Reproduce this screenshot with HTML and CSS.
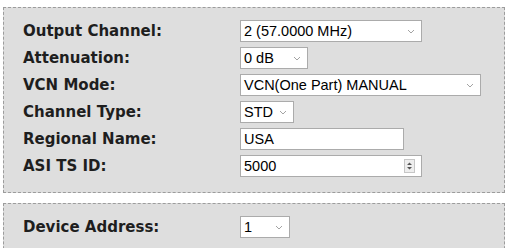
FILE: index.html
```html
<!DOCTYPE html>
<html lang="en">
<head>
<meta charset="UTF-8">
<meta name="viewport" content="width=device-width, initial-scale=1.0">
<title>Channel Settings</title>
<link rel="stylesheet" href="styles.css">
</head>
<body>

<div class="panel">
    <div class="row">
        <span class="label">Output Channel:</span>
        <div class="field select w-182">
            <span>2 (57.0000 MHz)</span>
            <svg class="chevron" width="8" height="5" viewBox="0 0 8 5"><path d="M1 1l3 3 3-3" /></svg>
        </div>
    </div>
    <div class="row">
        <span class="label">Attenuation:</span>
        <div class="field select w-68">
            <span>0 dB</span>
            <svg class="chevron" width="8" height="5" viewBox="0 0 8 5"><path d="M1 1l3 3 3-3" /></svg>
        </div>
    </div>
    <div class="row">
        <span class="label">VCN Mode:</span>
        <div class="field select w-241">
            <span>VCN(One Part) MANUAL</span>
            <svg class="chevron" width="8" height="5" viewBox="0 0 8 5"><path d="M1 1l3 3 3-3" /></svg>
        </div>
    </div>
    <div class="row">
        <span class="label">Channel Type:</span>
        <div class="field select w-54">
            <span>STD</span>
            <svg class="chevron" width="8" height="5" viewBox="0 0 8 5"><path d="M1 1l3 3 3-3" /></svg>
        </div>
    </div>
    <div class="row">
        <span class="label">Regional Name:</span>
        <div class="field w-164">
            <span>USA</span>
        </div>
    </div>
    <div class="row">
        <span class="label">ASI TS ID:</span>
        <div class="field number w-182">
            <span>5000</span>
            <svg class="spinner" width="11" height="14" viewBox="0 0 11 14">
                <rect x="0.5" y="0.5" width="10" height="13" />
                <path d="M3 6h5L5.5 3.5z M3 8h5l-2.5 2.5z" />
            </svg>
        </div>
    </div>
</div>

<div class="panel panel-device">
    <div class="row">
        <span class="label">Device Address:</span>
        <div class="field select w-50">
            <span>1</span>
            <svg class="chevron" width="8" height="5" viewBox="0 0 8 5"><path d="M1 1l3 3 3-3" /></svg>
        </div>
    </div>
</div>

</body>
</html>
```

FILE: styles.css
```css
body {
    margin: 0;
    padding: 0;
    background-color: #fff;
    font-family: "Liberation Sans", Arial, sans-serif;
}

.panel {
    display: flex;
    flex-direction: column;
    gap: 5px;
    margin: 7px 7px 0 3px;
    padding: 12px 19px 15px;
    background-color: #dedede;
    border: 1px dashed #9c9c9c;
}

.panel-device {
    margin-top: 10px;
}

.row {
    display: flex;
    align-items: center;
    height: 22px;
}

.label {
    width: 217px;
    flex-shrink: 0;
    font-family: "DejaVu Sans", Verdana, sans-serif;
    font-weight: bold;
    font-size: 15px;
    color: #1e1e1e;
}

.field {
    box-sizing: border-box;
    height: 22px;
    display: flex;
    align-items: center;
    justify-content: space-between;
    padding: 0 6px 0 3px;
    background-color: #fff;
    border: 1px solid #ababab;
    font-size: 14.5px;
    color: #000;
}

.number {
    padding-right: 6px;
}

.chevron path {
    fill: none;
    stroke: #a3a3a3;
    stroke-width: 1;
}

.spinner rect {
    fill: #eeeeee;
    stroke: #c6c6c6;
}

.spinner path {
    fill: #555;
}

.w-50 { width: 50px; }
.w-54 { width: 54px; }
.w-68 { width: 68px; }
.w-164 { width: 164px; }
.w-182 { width: 182px; }
.w-241 { width: 241px; }
```
